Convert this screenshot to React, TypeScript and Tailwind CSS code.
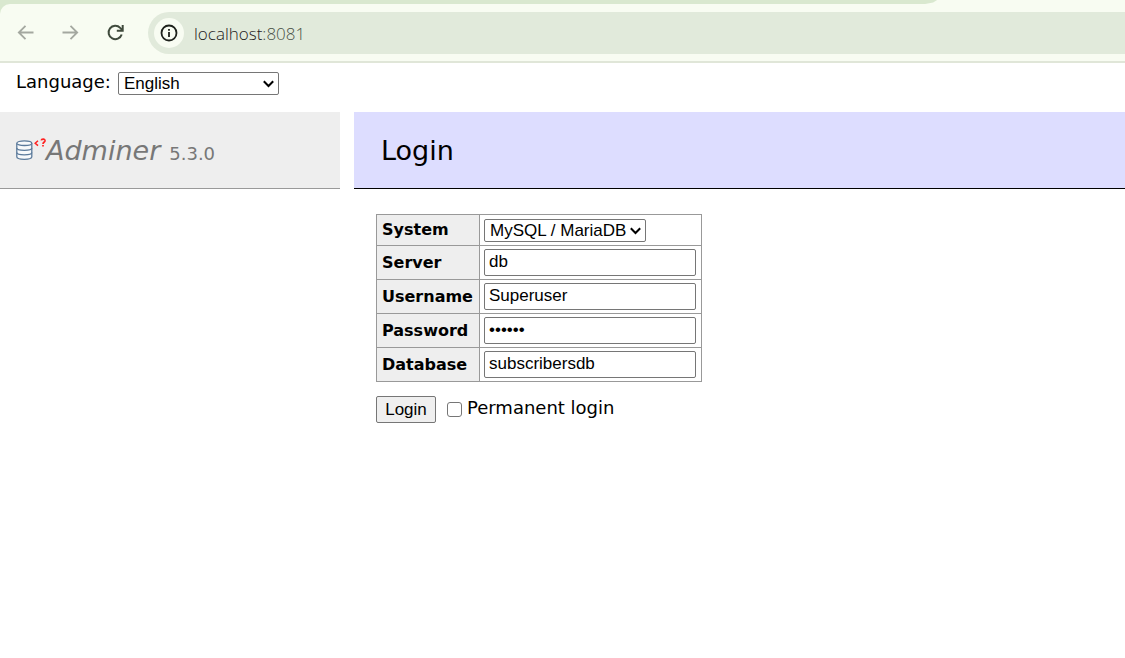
import type { ReactNode } from 'react';

const sans = "font-['DejaVu_Sans',sans-serif]";
const control = "font-['Liberation_Sans',sans-serif] text-[17px]";

function Select({ id, options, className }: { id: string; options: string[]; className: string }) {
  return (
    <span className={`relative inline-flex ${className}`}>
      <select
        id={id}
        className={`${control} h-[23px] w-full appearance-none rounded-[2px] border border-[#767676] bg-white pl-[5px] leading-[21px] text-black`}
      >
        {options.map((o) => (
          <option key={o}>{o}</option>
        ))}
      </select>
      <svg className="pointer-events-none absolute right-1 top-[7px] h-[10px] w-3" viewBox="0 0 12 10" fill="none" stroke="#000" strokeWidth="2">
        <path d="M.8 2.2 5.500 7 10.200 2.200" />
      </svg>
    </span>
  );
}

function Row({ id, label, children }: { id: string; label: string; children: ReactNode }) {
  return (
    <tr>
      <th className="w-[103px] border border-[#999] bg-[#eee] px-[5px] py-0 text-left text-[16px] font-bold leading-5">
        <label htmlFor={id}>{label}</label>
      </th>
      <td className="border border-[#999] py-[3px] pl-1 pr-[5px]">
        <div className="flex">{children}</div>
      </td>
    </tr>
  );
}

function Field({ id, type = 'text', value }: { id: string; type?: string; value: string }) {
  return (
    <input
      id={id}
      type={type}
      defaultValue={value}
      className={`${control} h-[27px] w-[212px] rounded-[2px] border border-[#767676] bg-white px-1 pb-[2px] leading-5 text-black`}
    />
  );
}

function BrowserBar() {
  return (
    <header className="bg-[#d9e8cf]">
      <div className="flex h-1">
        <div className="w-[83.3%] rounded-br-[10px] bg-[#d9e8cf]" />
        <div className="-ml-3 flex-1 bg-[#f8fcf2] [clip-path:polygon(12px_0,100%_0,100%_100%,0_100%,8px_60%)]" />
      </div>
      <div className="flex h-[59px] items-start rounded-tl-[10px] border-b-2 border-[#e0e6d8] bg-[#f8fcf2] pt-2">
        <nav className="flex h-[42px] items-center gap-[25px] pl-4 pr-[22px]">
          <button aria-label="Back" className="h-5 w-5">
            <svg viewBox="0 0 20 20" fill="none" stroke="#a4a8a0" strokeWidth="1.8">
              <path d="M17.5 9.5H3M9.5 2.8 2.8 9.5l6.7 6.7" />
            </svg>
          </button>
          <button aria-label="Forward" className="h-5 w-5">
            <svg viewBox="0 0 20 20" fill="none" stroke="#a4a8a0" strokeWidth="1.8">
              <path d="M1.5 9.5H16M9.5 2.8l6.7 6.7-6.7 6.7" />
            </svg>
          </button>
          <button aria-label="Reload" className="h-5 w-5">
            <svg viewBox="0 0 20 20" fill="none" stroke="#3f4a3c" strokeWidth="2">
              <path d="M15.700 11.500A6.700 6.700 0 1 1 14.200 4.900L16.500 7.200" />
              <path d="M16.700 2v5.700h-5.900" />
            </svg>
          </button>
        </nav>
        <div className="flex h-[42px] flex-1 items-center gap-[10px] rounded-l-full bg-[#e1eadb] pl-[6px]">
          <button aria-label="Site information" className="flex h-[30px] w-[30px] items-center justify-center rounded-full bg-[#f8fcf2]">
            <svg className="h-[18px] w-[18px]" viewBox="0 0 18 18" fill="none" stroke="#1d211b" strokeWidth="1.8">
              <circle cx="9" cy="9" r="7.5" />
              <path d="M9 8v5M9 5v1.8" />
            </svg>
          </button>
          <span className="pt-px font-['Open_Sans','Noto_Sans',sans-serif] text-[17px] font-light leading-6 text-[#1d211b]">
            localhost<span className="text-[#4a5147]">:8081</span>
          </span>
        </div>
      </div>
    </header>
  );
}

function Logo() {
  return (
    <svg className="h-6 w-[30px] shrink-0" viewBox="0 0 30 24" fill="none">
      <g stroke="#5b7a9b" strokeWidth="1.300">
        <path d="M.8 5.200v13.600c0 1.500 3.200 2.500 7.500 2.500s7.500-1 7.500-2.500V5.200" fill="#f7f9fb" />
        <path d="M.8 10c0 1.500 3.200 2.300 7.500 2.300s7.500-.8 7.500-2.300M.8 14.600c0 1.500 3.200 2.300 7.500 2.300s7.500-.8 7.500-2.300" />
        <ellipse cx="8.300" cy="5.200" rx="7.500" ry="2.300" fill="#f7f9fb" />
      </g>
      <g stroke="#f22" strokeWidth="1.500">
        <path d="M22 2.800 19.200 5.200 22 7.600" />
        <path d="M25.200 2.400C25.600.6 29.200.6 29 2.900 28.800 4.300 27 4.200 27 5.900M27 7v1.500" strokeWidth="1.700" />
      </g>
    </svg>
  );
}

export default function App() {
  return (
    <div className={`${sans} min-h-screen bg-white text-black`}>
      <BrowserBar />
      <div className="flex items-center gap-[7px] px-4 pb-[17px] pt-[9px]">
        <label htmlFor="lang" className="-mt-1 text-[18px] leading-5">Language:</label>
        <Select id="lang" options={['English']} className="w-[161px]" />
      </div>
      <div className="flex items-start gap-[14px]">
        <aside className="flex h-[77px] w-[340px] shrink-0 items-center border-b border-[#999] bg-[#eee] pl-4 text-[#777]">
          <Logo />
          <h1 className="flex items-baseline gap-[9px] pt-[2px]">
            <a href="#adminer" className="text-[27px] italic leading-9">Adminer</a>
            <span className="text-[18px]">5.3.0</span>
          </h1>
        </aside>
        <main className="min-w-0 flex-1">
          <h2 className="flex h-[77px] items-center border-b border-black bg-[#ddf] pl-[27px] pt-[2px] text-[27px] leading-9">Login</h2>
          <form className="pl-[22px] pt-[25px]" onSubmit={(e) => e.preventDefault()}>
            <table className="border-collapse">
              <tbody>
                <Row id="system" label="System">
                  <div className="flex pt-px">
                    <Select id="system" options={['MySQL / MariaDB']} className="w-[162px]" />
                  </div>
                </Row>
                <Row id="server" label="Server"><Field id="server" value="db" /></Row>
                <Row id="username" label="Username"><Field id="username" value="Superuser" /></Row>
                <Row id="password" label="Password"><Field id="password" type="password" value="secret" /></Row>
                <Row id="database" label="Database"><Field id="database" value="subscribersdb" /></Row>
              </tbody>
            </table>
            <div className="mt-[14px] flex items-center">
              <button type="submit" className={`${control} h-[27px] w-[60px] rounded-[2px] border border-[#767676] bg-[#efefef] leading-5`}>Login</button>
              <input id="permanent" type="checkbox" className="ml-[11px] h-[15px] w-[15px] appearance-none rounded-[3px] border border-[#767676] bg-white" />
              <label htmlFor="permanent" className="-mt-1 ml-[5px] text-[18px] leading-5">Permanent login</label>
            </div>
          </form>
        </main>
      </div>
    </div>
  );
}
